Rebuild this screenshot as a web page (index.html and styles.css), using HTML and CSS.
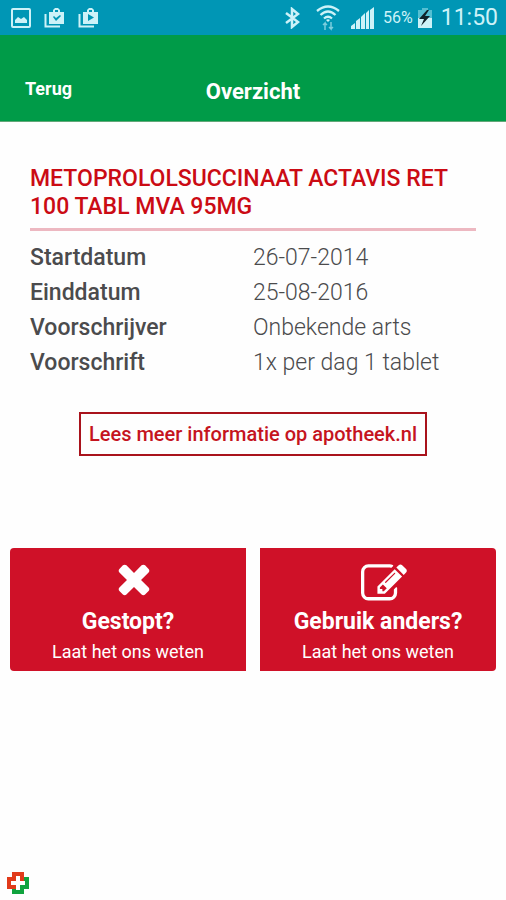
FILE: index.html
```html
<!DOCTYPE html>
<html lang="nl">
<head>
<meta charset="utf-8">
<meta name="viewport" content="width=device-width, initial-scale=1">
<title>Overzicht</title>
<link rel="stylesheet" href="styles.css">
</head>
<body>
<div class="status">
  <div class="notifications">
    <svg width="20" height="20" viewBox="0 0 20 20" aria-hidden="true"><rect x="1" y="1" width="18" height="18" rx="1" fill="none" stroke="currentColor" stroke-width="2"/><path d="M4 15v-3l3-3 3 2 3-2 3 3v3z" fill="currentColor"/></svg>
    <svg width="21" height="20" viewBox="0 0 21 20" aria-hidden="true"><path d="M1.500 6v12.500H16" fill="none" stroke="currentColor" stroke-width="2"/><path fill="currentColor" fill-rule="evenodd" d="M5 4h4V2l2-2h3l2 2v2h4v12H5zM11 4h3V2h-3zM9 9l3 4 5-5-1-1-4 3-2-2z"/></svg>
    <svg width="21" height="20" viewBox="0 0 21 20" aria-hidden="true"><path d="M1.500 6v12.500H16" fill="none" stroke="currentColor" stroke-width="2"/><path fill="currentColor" fill-rule="evenodd" d="M5 4h4V2l2-2h3l2 2v2h4v12H5zM11 4h3V2h-3zM10 6v7l6-3.500z"/></svg>
  </div>
  <div class="system">
    <svg class="bluetooth" width="16" height="22" viewBox="0 0 16 22" aria-hidden="true"><path d="M2 6l12 9-6 5V2l6 5-12 9" fill="none" stroke="currentColor" stroke-width="2.500"/></svg>
    <svg class="wifi" width="24" height="26" viewBox="0 0 24 26" aria-hidden="true"><g fill="none" stroke="currentColor" stroke-width="2.300"><path d="M1 6Q12-3 23 6M4.500 10Q12 3 19.500 10M8 13.500Q12 10 16 13.500"/></g><path d="M12 17l-2-2q2-1.500 4 0z" fill="currentColor"/><path d="M9 25v-7l-2 2m2-2 2 2M15 17v7l-2-2m2 2 2-2" fill="none" stroke="currentColor" opacity=".6" stroke-width="1.500"/></svg>
    <svg class="signal" width="24" height="22" viewBox="0 0 24 22" aria-hidden="true"><path d="M0 22v-3l4-3v6zM5 22v-8l4-3v11zM10 22V10l4-4v16zM15 22V6l3-3v19zM19 22V3l4-3v22z" fill="currentColor"/></svg>
    <span class="percent">56%</span>
    <svg class="battery" width="14" height="20" viewBox="0 0 14 20" aria-hidden="true"><path d="M0 2h4V0h6v2h4v8H0z" fill="#55bfd2"/><path d="M0 10h14v10H0z" fill="currentColor"/><path d="M9 2L1 11h5l-3 7 9-10H7l4-6z" fill="#102229"/></svg>
    <span class="clock">11:50</span>
  </div>
</div>
<header class="header">
  <a class="back" href="#">Terug</a>
  <h1 class="title">Overzicht</h1>
</header>
<main class="content">
  <section class="medicine">
    <h2 class="name">METOPROLOLSUCCINAAT ACTAVIS RET 100 TABL MVA 95MG</h2>
    <dl class="details">
      <dt>Startdatum</dt><dd>26-07-2014</dd>
      <dt>Einddatum</dt><dd>25-08-2016</dd>
      <dt>Voorschrijver</dt><dd>Onbekende arts</dd>
      <dt>Voorschrift</dt><dd>1x per dag 1 tablet</dd>
    </dl>
  </section>
  <a class="more" href="#">Lees meer informatie op apotheek.nl</a>
  <div class="actions">
    <button class="action action-left" type="button">
      <svg class="icon" width="46" height="38" viewBox="-188 302 1784 1474" aria-hidden="true"><path d="M1298 1322q0 40-28 68l-136 136q-28 28-68 28t-68-28l-294-294-294 294q-28 28-68 28t-68-28l-136-136q-28-28-28-68t28-68l294-294-294-294q-28-28-28-68t28-68l136-136q28-28 68-28t68 28l294 294 294-294q28-28 68-28t68 28l136 136q28 28 28 68t-28 68l-294 294 294 294q28 28 28 68z"/></svg>
      <span class="action-title">Gestopt?</span>
      <span class="action-text">Laat het ons weten</span>
    </button>
    <button class="action action-right" type="button">
      <svg class="icon" width="46" height="38" viewBox="0 80 1792 1480" aria-hidden="true"><path d="M888 1184l116-116-152-152-116 116v56h96v96h56zm440-720q-16-16-33 1l-350 350q-17 17-1 33t33-1l350-350q17-17 1-33zm80 594v190q0 119-84.500 203.500t-203.500 84.500h-832q-119 0-203.500-84.500t-84.500-203.500v-832q0-119 84.500-203.500t203.500-84.500h832q63 0 117 25 15 7 18 23 3 17-9 29l-49 49q-14 14-32 8-23-6-45-6h-832q-66 0-113 47t-47 113v832q0 66 47 113t113 47h832q66 0 113-47t47-113v-126q0-13 9-22l64-64q15-15 35-7t20 29zm-96-738l288 288-672 672h-288v-288zm444 132l-92 92-288-288 92-92q28-28 68-28t68 28l152 152q28 28 28 68t-28 68z"/></svg>
      <span class="action-title">Gebruik anders?</span>
      <span class="action-text">Laat het ons weten</span>
    </button>
  </div>
</main>
<footer class="footer">
  <svg width="22" height="22" viewBox="0 0 22 22" role="img" aria-label="Apotheek"><path d="M5 0h12v5h5v3L8 22H5v-5H0V5h5z" fill="#e13a1a"/><path d="M17 5h5v12h-5v5H5v-5h4l8-8z" fill="#10a33e"/><path d="M9 4h4v5h5v4h-5v5H9v-5H4V9h5z" fill="#fff"/></svg>
</footer>
</body>
</html>
```
FILE: styles.css
```css
* { box-sizing: border-box; }

body {
  display: flex;
  flex-direction: column;
  min-height: 100vh;
  margin: 0;
  background: #fefefe;
  color: #4b4b4d;
  font-family: Roboto, "Liberation Sans", sans-serif;
}

svg { display: block; flex: none; }

.status {
  display: flex;
  align-items: center;
  justify-content: space-between;
  height: 35px;
  padding: 0 8px 0 11px;
  background: #0096b5;
  color: #cdf2f8;
}

.notifications {
  display: flex;
  gap: 13px;
}

.system {
  display: flex;
  align-items: center;
  gap: 8px;
}

.bluetooth { margin-right: 8px; }

.wifi { margin-right: 3px; }

.percent { font-size: 16px; }

.battery { margin-left: -3px; }

.clock {
  padding-left: 1px;
  font-size: 23px;
}

.header {
  display: grid;
  grid-template-columns: 1fr auto 1fr;
  align-items: center;
  padding: 40px 25px 14px;
  border-bottom: 1px solid #62a878;
  background: #009b48;
  color: #fff;
}

.back {
  color: inherit;
  font-size: 18px;
  font-weight: 700;
  line-height: 24px;
  padding-bottom: 4px;
  text-decoration: none;
}

.title {
  margin: 0;
  padding-top: 2px;
  font-size: 22px;
  font-weight: 700;
  line-height: 30px;
}

.content {
  display: flex;
  flex: 1;
  flex-direction: column;
  align-items: center;
  padding: 43px 10px 0;
}

.medicine {
  align-self: stretch;
  padding: 0 20px;
}

.name {
  margin: 0;
  padding-bottom: 7px;
  border-bottom: 3px solid #edb8c1;
  color: #cb0b14;
  font-size: 23px;
  font-weight: 500;
  line-height: 28px;
}

.details {
  display: grid;
  grid-template-columns: 1fr 1fr;
  margin: 9px 0 0;
  font-size: 23px;
  line-height: 35px;
}

.details dt { font-weight: 500; }

.details dd {
  margin: 0;
  font-weight: 300;
}

.more {
  margin-top: 32px;
  padding: 6px 8px;
  border: 2px solid #a9131c;
  color: #c5141e;
  font-size: 20px;
  font-weight: 500;
  line-height: 28px;
  text-decoration: none;
}

.actions {
  display: grid;
  grid-template-columns: 1fr 1fr;
  align-self: stretch;
  gap: 14px;
  margin-top: 92px;
}

.action {
  display: flex;
  flex-direction: column;
  align-items: center;
  padding: 15px 0 6px;
  border: 0;
  background: #cf1128;
  color: #fff;
  font-family: inherit;
}

.action-left { border-radius: 4px 0 0 4px; }

.action-right { border-radius: 0 4px 4px 0; }

.icon {
  margin-left: 11px;
  fill: currentColor;
}

.action-title {
  margin-top: 5px;
  font-size: 23px;
  font-weight: 700;
  line-height: 32px;
}

.action-text {
  font-size: 18px;
  line-height: 27px;
}

.footer { padding: 0 7px 6px; }
```
